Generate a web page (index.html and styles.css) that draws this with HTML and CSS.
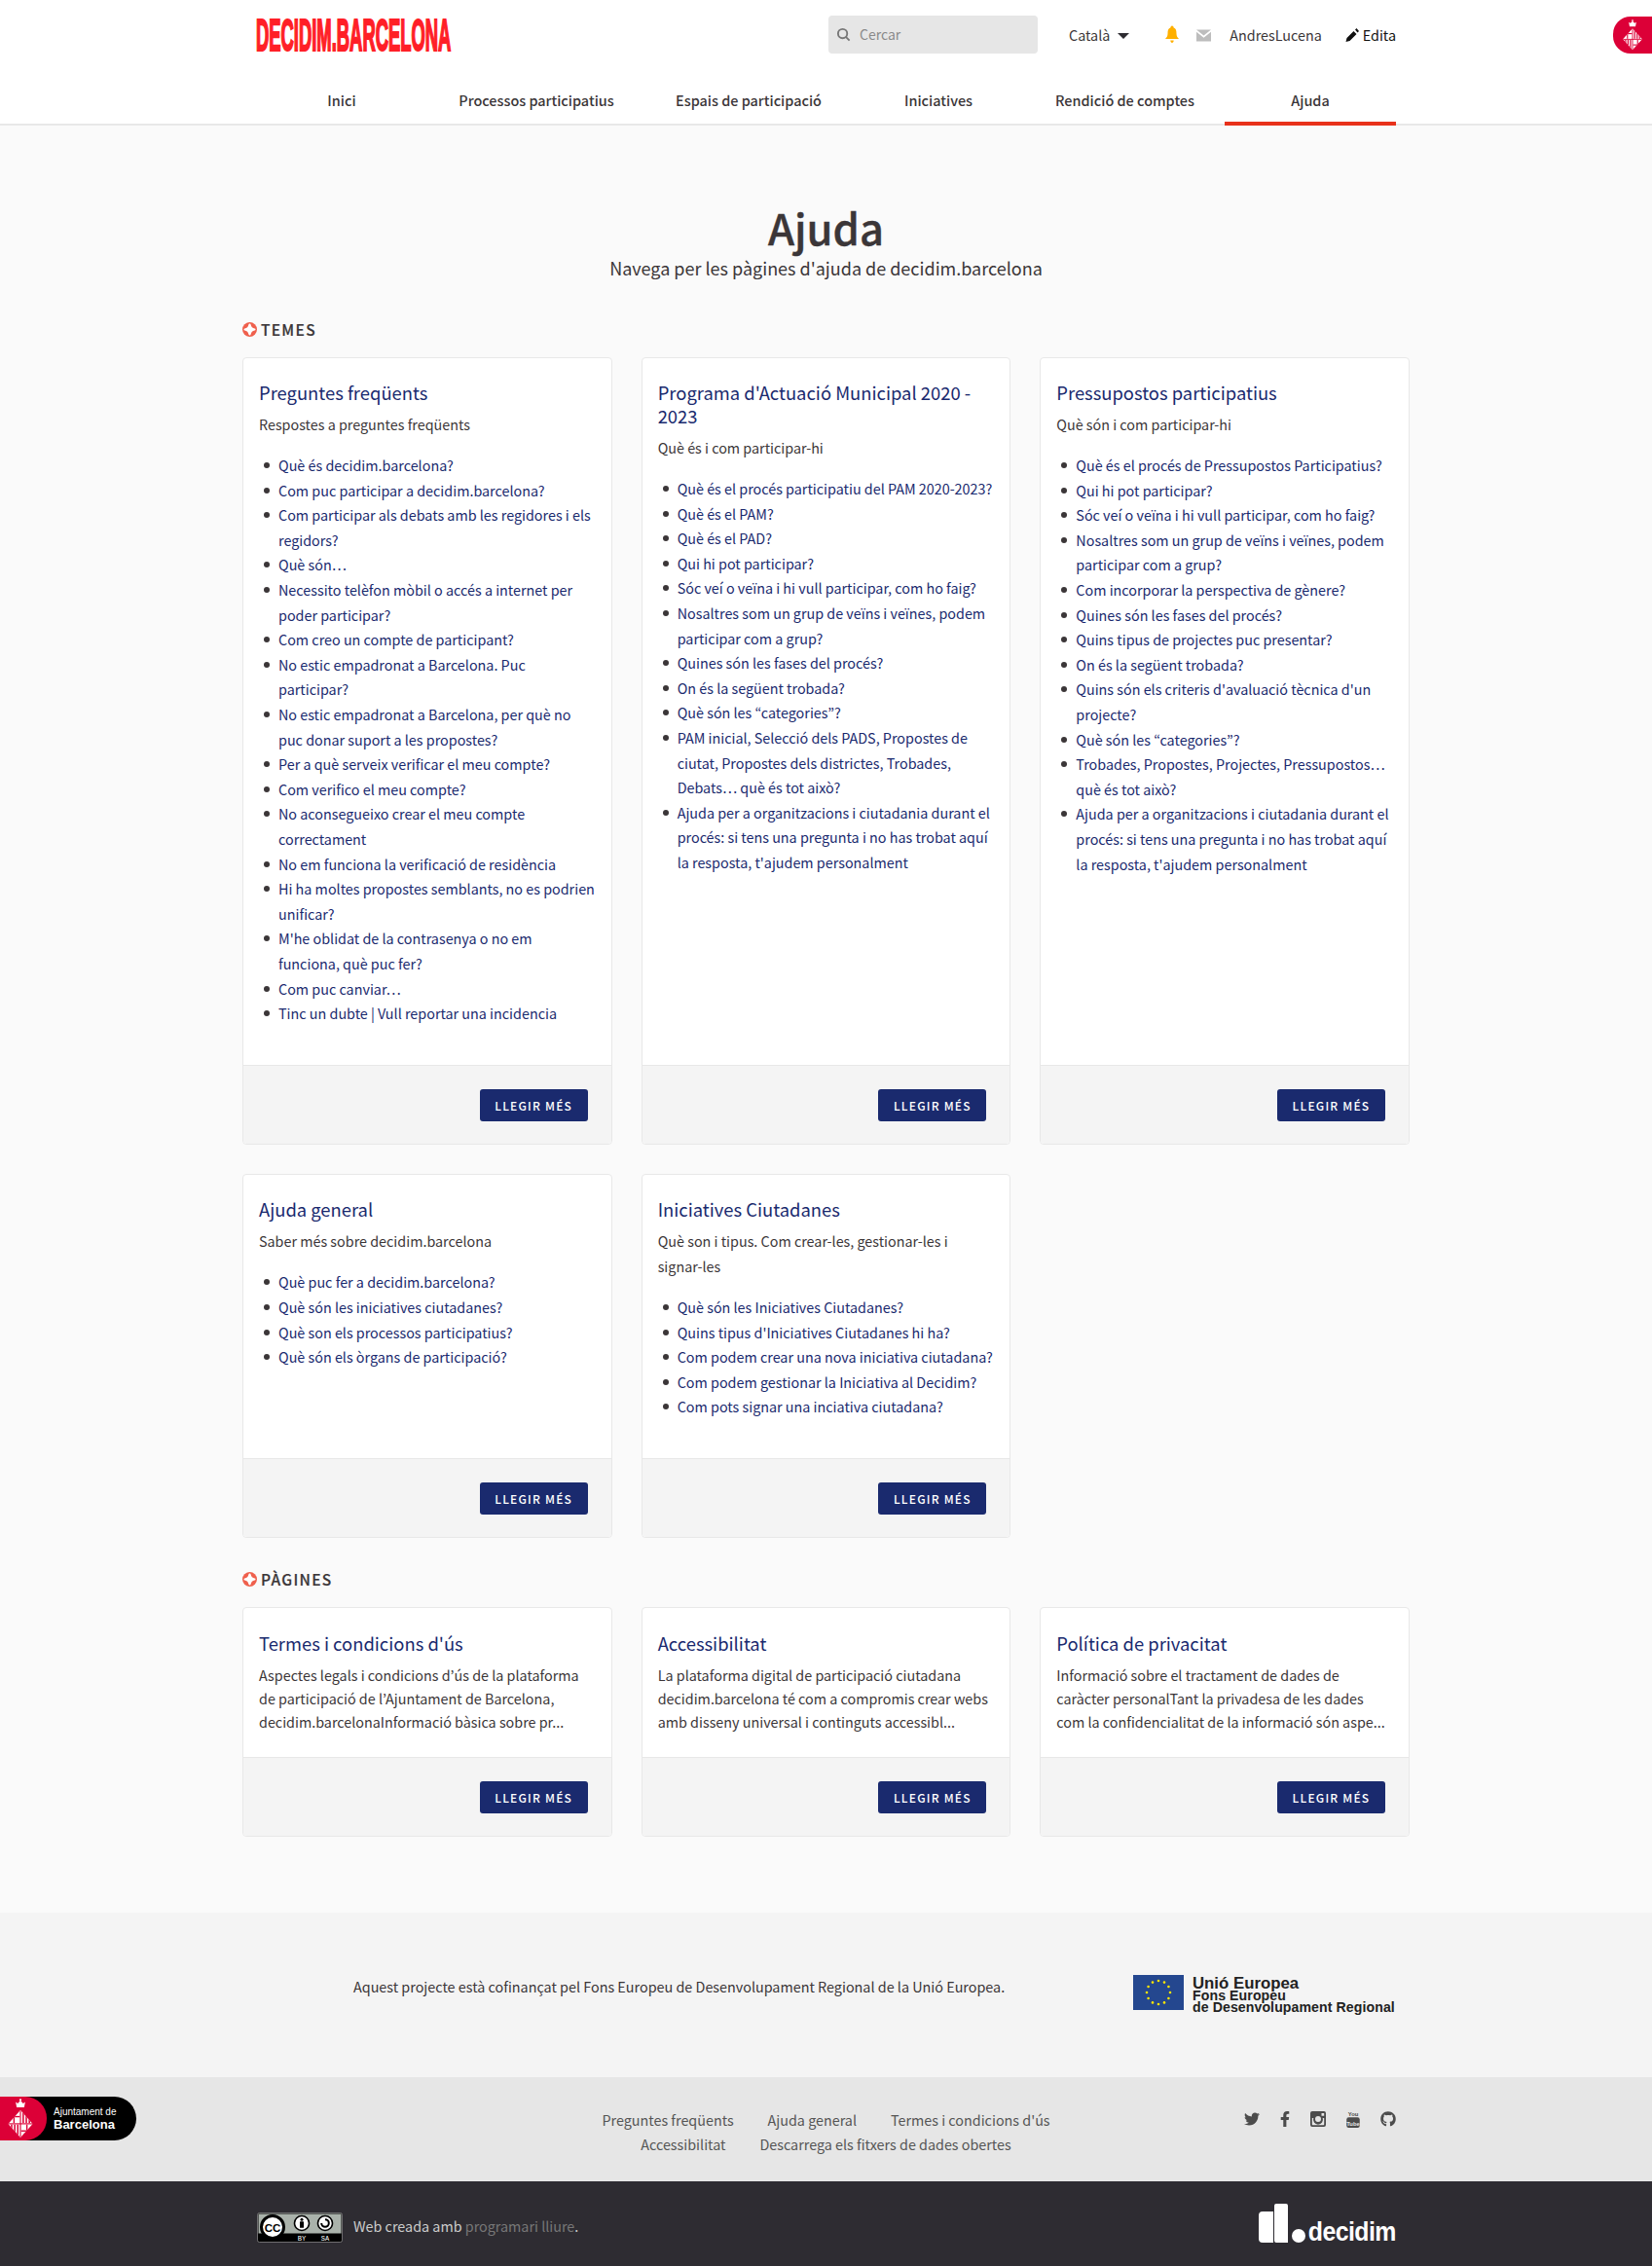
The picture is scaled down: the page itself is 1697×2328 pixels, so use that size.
FILE: index.html
```html
<!DOCTYPE html>
<html lang="ca">
<head>
<meta charset="utf-8">
<title>Ajuda</title>
<link rel="stylesheet" href="styles.css">
</head>
<body>
<svg class="defs" width="0" height="0" aria-hidden="true">
  <clipPath id="lozenge"><path d="M20 17L38 37 20 57 2 37z"/></clipPath>
  <symbol id="shield" viewBox="0 0 40 60">
    <path fill="#fff" d="M13 5l3 2 4-4 4 4 3-2-1.500 8h-11z"/>
    <circle cx="20" cy="2" r="1.600" fill="#fff"/>
    <g clip-path="url(#lozenge)">
      <rect width="40" height="60" fill="#fff"/>
      <g fill="#dc0037">
        <rect x="23" y="17" width="2.200" height="19"/><rect x="27.500" y="17" width="2.200" height="19"/><rect x="32" y="17" width="2.200" height="19"/>
        <rect x="6" y="38" width="2.200" height="19"/><rect x="10.500" y="38" width="2.200" height="19"/><rect x="15" y="38" width="2.200" height="19"/>
        <rect x="9.500" y="17" width="2" height="19"/><rect x="2" y="25.500" width="17" height="2"/>
        <rect x="28.500" y="38" width="2" height="19"/><rect x="21" y="46.500" width="17" height="2"/>
        <rect x="19.200" y="17" width="1.600" height="40"/><rect x="2" y="36.200" width="36" height="1.600"/>
      </g>
    </g>
  </symbol>
  <symbol id="plus" viewBox="0 0 16 16">
    <circle cx="8" cy="8" r="8" fill="#ef604d"/>
    <path fill="#fff" d="M8 2.800Q8.800 7.200 13.200 8 8.800 8.800 8 13.200 7.200 8.800 2.800 8 7.200 7.200 8 2.800z" stroke="#fff" stroke-width="2.400" stroke-linejoin="round"/>
  </symbol>
</svg>

<header class="site-header">
  <div class="top-row">
    <a class="logo">DECIDIM.BARCELONA</a>
    <div class="search">
      <svg class="search-icon" viewBox="0 0 16 16"><circle cx="7" cy="7" r="5" fill="none" stroke="#777" stroke-width="2"/><path d="M10.500 10.500l4 4" stroke="#777" stroke-width="2"/></svg>
      <span>Cercar</span>
    </div>
    <div class="lang">Català<span class="caret"></span></div>
    <svg class="bell" viewBox="0 0 16 18"><path fill="#ffb000" d="M8 0c1 0 1.500.8 1.500 1.800C12 2.600 12.500 5 12.500 8c0 2.500 1 4 2.500 5.500H1C2.500 12 3.500 10.500 3.500 8c0-3 .5-5.400 3-6.200C6.500.8 7 0 8 0zM6.300 15h3.400c0 1.500-.8 2.500-1.700 2.500S6.300 16.500 6.300 15z"/></svg>
    <svg class="mail" viewBox="0 0 16 13"><path fill="#bdbdbd" d="M0 0h16L8 6.500z"/><path fill="#bdbdbd" d="M0 2.500l8 6.500 8-6.500V13H0z"/></svg>
    <a class="user">AndresLucena</a>
    <a class="edit"><svg viewBox="0 0 14 14"><path fill="#111" d="M8.500 3l3 3L4.500 13 .5 14 1.500 10zM10 1.500L11.500 0 14 3 12.500 4.500z"/></svg>Edita</a>
  </div>
  <div class="corner-badge"><svg width="22" height="33"><use href="#shield"/></svg></div>
  <nav class="main-nav">
    <a>Inici</a>
    <a>Processos participatius</a>
    <a>Espais de participació</a>
    <a>Iniciatives</a>
    <a>Rendició de comptes</a>
    <a class="active">Ajuda</a>
  </nav>
</header>

<main class="content">
  <div class="page-title">
    <h1>Ajuda</h1>
    <p>Navega per les pàgines d'ajuda de decidim.barcelona</p>
  </div>

  <h2 class="section-title"><svg width="15" height="15"><use href="#plus"/></svg>TEMES</h2>
  <div class="card-grid">
    <article class="card">
      <div class="card-body">
        <h3>Preguntes freqüents</h3>
        <p>Respostes a preguntes freqüents</p>
        <ul>
          <li>Què és decidim.barcelona?</li>
          <li>Com puc participar a decidim.barcelona?</li>
          <li>Com participar als debats amb les regidores i els regidors?</li>
          <li>Què són…</li>
          <li>Necessito telèfon mòbil o accés a internet per poder participar?</li>
          <li>Com creo un compte de participant?</li>
          <li>No estic empadronat a Barcelona. Puc participar?</li>
          <li>No estic empadronat a Barcelona, per què no puc donar suport a les propostes?</li>
          <li>Per a què serveix verificar el meu compte?</li>
          <li>Com verifico el meu compte?</li>
          <li>No aconsegueixo crear el meu compte correctament</li>
          <li>No em funciona la verificació de residència</li>
          <li>Hi ha moltes propostes semblants, no es podrien unificar?</li>
          <li>M'he oblidat de la contrasenya o no em funciona, què puc fer?</li>
          <li>Com puc canviar…</li>
          <li>Tinc un dubte | Vull reportar una incidencia</li>
        </ul>
      </div>
      <div class="card-foot"><a class="btn">Llegir més</a></div>
    </article>
    <article class="card">
      <div class="card-body">
        <h3>Programa d'Actuació Municipal 2020 - 2023</h3>
        <p>Què és i com participar-hi</p>
        <ul>
          <li>Què és el procés participatiu del PAM 2020-2023?</li>
          <li>Què és el PAM?</li>
          <li>Què és el PAD?</li>
          <li>Qui hi pot participar?</li>
          <li>Sóc veí o veïna i hi vull participar, com ho faig?</li>
          <li>Nosaltres som un grup de veïns i veïnes, podem participar com a grup?</li>
          <li>Quines són les fases del procés?</li>
          <li>On és la següent trobada?</li>
          <li>Què són les “categories”?</li>
          <li>PAM inicial, Selecció dels PADS, Propostes de ciutat, Propostes dels districtes, Trobades, Debats… què és tot això?</li>
          <li>Ajuda per a organitzacions i ciutadania durant el procés: si tens una pregunta i no has trobat aquí la resposta, t'ajudem personalment</li>
        </ul>
      </div>
      <div class="card-foot"><a class="btn">Llegir més</a></div>
    </article>
    <article class="card">
      <div class="card-body">
        <h3>Pressupostos participatius</h3>
        <p>Què són i com participar-hi</p>
        <ul>
          <li>Què és el procés de Pressupostos Participatius?</li>
          <li>Qui hi pot participar?</li>
          <li>Sóc veí o veïna i hi vull participar, com ho faig?</li>
          <li>Nosaltres som un grup de veïns i veïnes, podem participar com a grup?</li>
          <li>Com incorporar la perspectiva de gènere?</li>
          <li>Quines són les fases del procés?</li>
          <li>Quins tipus de projectes puc presentar?</li>
          <li>On és la següent trobada?</li>
          <li>Quins són els criteris d'avaluació tècnica d'un projecte?</li>
          <li>Què són les “categories”?</li>
          <li>Trobades, Propostes, Projectes, Pressupostos… què és tot això?</li>
          <li>Ajuda per a organitzacions i ciutadania durant el procés: si tens una pregunta i no has trobat aquí la resposta, t'ajudem personalment</li>
        </ul>
      </div>
      <div class="card-foot"><a class="btn">Llegir més</a></div>
    </article>
    <article class="card">
      <div class="card-body">
        <h3>Ajuda general</h3>
        <p>Saber més sobre decidim.barcelona</p>
        <ul>
          <li>Què puc fer a decidim.barcelona?</li>
          <li>Què són les iniciatives ciutadanes?</li>
          <li>Què son els processos participatius?</li>
          <li>Què són els òrgans de participació?</li>
        </ul>
      </div>
      <div class="card-foot"><a class="btn">Llegir més</a></div>
    </article>
    <article class="card">
      <div class="card-body">
        <h3>Iniciatives Ciutadanes</h3>
        <p>Què son i tipus. Com crear-les, gestionar-les i signar-les</p>
        <ul>
          <li>Què són les Iniciatives Ciutadanes?</li>
          <li>Quins tipus d'Iniciatives Ciutadanes hi ha?</li>
          <li>Com podem crear una nova iniciativa ciutadana?</li>
          <li>Com podem gestionar la Iniciativa al Decidim?</li>
          <li>Com pots signar una inciativa ciutadana?</li>
        </ul>
      </div>
      <div class="card-foot"><a class="btn">Llegir més</a></div>
    </article>
  </div>

  <h2 class="section-title section-pages"><svg width="15" height="15"><use href="#plus"/></svg>PÀGINES</h2>
  <div class="card-grid">
    <article class="card">
      <div class="card-body compact">
        <h3>Termes i condicions d'ús</h3>
        <p>Aspectes legals i condicions d’ús de la plataforma de participació de l’Ajuntament de Barcelona, decidim.barcelonaInformació bàsica sobre pr...</p>
      </div>
      <div class="card-foot"><a class="btn">Llegir més</a></div>
    </article>
    <article class="card">
      <div class="card-body compact">
        <h3>Accessibilitat</h3>
        <p>La plataforma digital de participació ciutadana decidim.barcelona té com a compromis crear webs amb disseny universal i continguts accessibl...</p>
      </div>
      <div class="card-foot"><a class="btn">Llegir més</a></div>
    </article>
    <article class="card">
      <div class="card-body compact">
        <h3>Política de privacitat</h3>
        <p>Informació sobre el tractament de dades de caràcter personalTant la privadesa de les dades com la confidencialitat de la informació són aspe...</p>
      </div>
      <div class="card-foot"><a class="btn">Llegir més</a></div>
    </article>
  </div>
</main>

<section class="funding">
  <p>Aquest projecte està cofinançat pel Fons Europeu de Desenvolupament Regional de la Unió Europea.</p>
  <div class="eu-logo">
    <svg class="eu-flag" viewBox="0 0 52 36">
      <rect width="52" height="36" fill="#24478f"/>
      <g fill="#ffe600">
        <circle cx="26" cy="6" r="1.300"/><circle cx="32" cy="7.600" r="1.300"/><circle cx="36.400" cy="12" r="1.300"/><circle cx="38" cy="18" r="1.300"/><circle cx="36.400" cy="24" r="1.300"/><circle cx="32" cy="28.400" r="1.300"/><circle cx="26" cy="30" r="1.300"/><circle cx="20" cy="28.400" r="1.300"/><circle cx="15.600" cy="24" r="1.300"/><circle cx="14" cy="18" r="1.300"/><circle cx="15.600" cy="12" r="1.300"/><circle cx="20" cy="7.600" r="1.300"/>
      </g>
    </svg>
    <div class="eu-text">
      <strong>Unió Europea</strong>
      <span>Fons Europeu</span>
      <span>de Desenvolupament Regional</span>
    </div>
  </div>
</section>

<footer class="main-footer">
  <a class="bcn-logo">
    <span class="bcn-red"><svg width="28" height="42"><use href="#shield"/></svg></span>
    <span class="bcn-text"><small>Ajuntament de</small><b>Barcelona</b></span>
  </a>
  <nav class="foot-links">
    <a>Preguntes freqüents</a><a>Ajuda general</a><a>Termes i condicions d'ús</a><a>Accessibilitat</a><a>Descarrega els fitxers de dades obertes</a>
  </nav>
  <div class="socials">
    <svg class="s-tw" viewBox="0 0 512 512"><path d="M459.37 151.716c.325 4.548.325 9.097.325 13.645 0 138.72-105.583 298.558-298.558 298.558-59.452 0-114.68-17.219-161.137-47.106 8.447.974 16.568 1.299 25.34 1.299 49.055 0 94.213-16.568 130.274-44.832-46.132-.975-84.792-31.188-98.112-72.772 6.498.974 12.995 1.624 19.818 1.624 9.421 0 18.843-1.3 27.614-3.573-48.081-9.747-84.143-51.98-84.143-102.985v-1.299c13.969 7.797 30.214 12.67 47.431 13.319-28.264-18.843-46.781-51.005-46.781-87.391 0-19.492 5.197-37.36 14.294-52.954 51.655 63.675 129.3 105.258 216.365 109.807-1.624-7.797-2.599-15.918-2.599-24.04 0-57.828 46.782-104.934 104.934-104.934 30.213 0 57.502 12.67 76.67 33.137 23.715-4.548 46.456-13.32 66.599-25.34-7.798 24.366-24.366 44.833-46.132 57.827 21.117-2.273 41.584-8.122 60.426-16.243-14.292 20.791-32.161 39.308-52.628 54.253z"/></svg>
    <svg class="s-fb" viewBox="0 0 320 512"><path d="M279.14 288l14.22-92.66h-88.91v-60.13c0-25.35 12.42-50.06 52.24-50.06h40.42V6.26S260.43 0 225.36 0c-73.22 0-121.08 44.38-121.08 124.72v70.62H22.89V288h81.39v224h100.17V288z"/></svg>
    <svg class="s-ig" viewBox="0 0 16 16"><path fill-rule="evenodd" d="M2 0h12a2 2 0 0 1 2 2v12a2 2 0 0 1-2 2H2a2 2 0 0 1-2-2V2a2 2 0 0 1 2-2zm9.500 2v2.700h2.700V2zM1.800 7v6.600c0 .4.300.6.600.6h11.200c.3 0 .6-.2.600-.6V7h-1.500a5 5 0 1 1-9.400 0zM8 5a3 3 0 1 0 0 6 3 3 0 0 0 0-6z"/></svg>
    <svg class="s-yt" viewBox="0 0 15 20"><text x="7.500" y="6.500" text-anchor="middle" class="yt-you">You</text><rect y="8" width="15" height="12" rx="2.500"/><text x="7.500" y="17.500" text-anchor="middle" class="yt-tube">Tube</text></svg>
    <svg class="s-gh" viewBox="0 0 496 512"><path d="M244.8 8C106.1 8 0 113.3 0 252c0 110.9 69.8 205.800 169.500 239.200 12.800 2.300 17.300-5.600 17.300-12.100 0-6.200-.3-40.400-.3-61.400 0 0-70 15-84.700-29.800 0 0-11.400-29.100-27.800-36.600 0 0-22.900-15.700 1.600-16 0 0 24.900 2 38.600 25.800 21.900 38.600 58.600 27.500 72.900 20.900 2.300-16 8.800-27.100 16-33.700-55.900-6.200-112.300-14.300-112.300-110.500 0-27.500 7.600-41.300 23.600-58.900-2.600-6.500-11.100-33.300 2.600-67.900 20.900-6.500 69 27 69 27 20-5.600 41.500-8.500 62.800-8.500s42.800 2.900 62.800 8.500c0 0 48.100-33.600 69-27 13.700 34.700 5.200 61.400 2.600 67.900 16 17.700 25.800 31.500 25.800 58.900 0 96.500-58.900 104.200-114.800 110.500 9.200 7.900 17 22.900 17 46.400 0 33.700-.3 75.400-.3 83.600 0 6.500 4.600 14.400 17.300 12.100C428.200 457.800 496 362.900 496 252 496 113.300 383.500 8 244.800 8z"/></svg>
  </div>
</footer>

<footer class="sub-footer">
  <div class="cc">
    <svg class="cc-badge" viewBox="0 0 88 31">
      <rect x=".5" y=".5" width="87" height="30" rx="2" fill="#000" stroke="#aaa" stroke-width=".6"/>
      <rect x="1.500" y="1.500" width="85" height="20" fill="#aab2ab"/>
      <circle cx="16" cy="15" r="11.500" fill="#fff" stroke="#000" stroke-width="3"/>
      <text x="16" y="19.500" text-anchor="middle" class="cc-mark">CC</text>
      <circle cx="46" cy="11" r="7.500" fill="#fff" stroke="#000" stroke-width="1.600"/>
      <circle cx="46" cy="7.200" r="1.500"/><rect x="44" y="9.300" width="4" height="6.500" rx=".6"/>
      <circle cx="70" cy="11" r="7.500" fill="#fff" stroke="#000" stroke-width="1.600"/>
      <path d="M70 7.200a3.800 3.800 0 1 1-3.800 3.800" fill="none" stroke="#000" stroke-width="2"/>
      <text x="46" y="29" text-anchor="middle" class="cc-small">BY</text>
      <text x="70" y="29" text-anchor="middle" class="cc-small">SA</text>
    </svg>
    <span class="cc-text">Web creada amb <a>programari lliure</a>.</span>
  </div>
  <div class="decidim-logo">
    <svg viewBox="0 0 48 40"><path fill="#fff" d="M4 8h11v32H4a4 4 0 0 1-4-4V12a4 4 0 0 1 4-4zM18 0h10a2 2 0 0 1 2 2v38H18a2 2 0 0 1-2-2V2a2 2 0 0 1 2-2z"/><circle cx="41" cy="33" r="7" fill="#fff"/></svg>
    <span>decidim</span>
  </div>
</footer>
</body>
</html>
```
FILE: styles.css
```css
* { box-sizing: border-box; }
html, body { margin: 0; padding: 0; }
body {
  background: #fafafa;
  color: #3b3638;
  font-family: "Noto Sans CJK KR", "Noto Sans", sans-serif;
  font-feature-settings: "pwid" 1;
  font-size: 14.350px;
  line-height: 25.600px;
}
.defs { position: absolute; }
p, h1, h2, h3, ul { margin: 0; padding: 0; }

.site-header {
  position: relative;
  background: #fff;
  height: 129px;
  border-bottom: 2px solid #e8e8e8;
}
.top-row {
  width: 1171px;
  margin-left: 263px;
  height: 72px;
  display: flex;
  align-items: flex-start;
  padding-top: 16px;
}
.logo {
  width: 204px;
  margin-top: 1px;
  color: #ff1f27;
  font-family: "Liberation Sans", sans-serif;
  font-weight: 700;
  font-size: 46px;
  line-height: 38px;
  white-space: nowrap;
  -webkit-text-stroke: 2.200px #ff1f27;
  transform: scaleX(.4);
  transform-origin: left center;
}
.search {
  margin-left: 384px;
  width: 215px;
  height: 39px;
  background: #e6e6e6;
  border-radius: 4px;
  display: flex;
  align-items: center;
  padding-left: 8px;
  color: #8a8a8a;
  font-size: 14px;
}
.search-icon { width: 15px; height: 15px; margin-right: 9px; }
.lang {
  margin-left: 32px;
  height: 39px;
  display: flex;
  align-items: center;
  color: #3b3638;
}
.caret {
  width: 0; height: 0;
  margin-left: 8px;
  margin-top: 3px;
  border: 6px solid transparent;
  border-top: 6px solid #2d2b31;
  border-bottom: 0;
}
.bell { width: 16px; height: 19px; margin-left: 36px; margin-top: 10px; }
.mail { width: 15px; height: 13px; margin-left: 17px; margin-top: 14px; }
.user { margin-left: 19px; line-height: 39px; }
.edit {
  margin-left: auto;
  line-height: 39px;
  color: #111;
  display: flex;
  align-items: center;
}
.edit svg { width: 14px; height: 14px; margin-right: 4px; }
.corner-badge {
  position: absolute;
  right: 0;
  top: 17px;
  width: 40px;
  height: 38px;
  background: #dc0037;
  border-radius: 18px 0 0 18px;
  display: flex;
  align-items: center;
  justify-content: center;
}
.main-nav {
  width: 1171px;
  margin-left: 263px;
  height: 55px;
  display: grid;
  grid-template-columns: 176fr 224fr 212fr 178fr 205fr 176fr;
  font-weight: 500;
  font-size: 14.450px;
  text-align: center;
}
.main-nav a {
  position: relative;
  line-height: 62px;
  height: 55px;
  white-space: nowrap;
}
.main-nav a.active::after {
  content: "";
  position: absolute;
  left: 0;
  right: 0;
  bottom: -2px;
  height: 4px;
  background: #e8311a;
}

.content {
  width: 1199px;
  margin-left: 249px;
  padding-bottom: 78px;
}
.page-title { text-align: center; padding-top: 77px; }
.page-title h1 {
  font-size: 43.500px;
  line-height: 55px;
  font-weight: 500;
  -webkit-text-stroke: .4px #3b3638;
}
.page-title p {
  font-size: 18px;
  line-height: 28px;
}
.section-title {
  margin-top: 37px;
  margin-bottom: 17px;
  display: flex;
  align-items: center;
  font-size: 15.500px;
  line-height: 24px;
  font-weight: 500;
  letter-spacing: 1.300px;
  -webkit-text-stroke: .2px #3b3638;
}
.section-title svg { margin-right: 4px; }
.section-pages { margin-top: 30px; margin-bottom: 17px; }

.card-grid {
  display: grid;
  grid-template-columns: repeat(3, 1fr);
  gap: 30px;
}
.card {
  display: flex;
  flex-direction: column;
  background: #fff;
  border: 1px solid #e8e8e8;
  border-radius: 4px;
  overflow: hidden;
}
.card-body { flex: 1; padding: 23px 16px 40.500px; }
.card-body h3 {
  font-size: 18.400px;
  line-height: 24px;
  font-weight: 400;
  color: #1a2a6e;
  margin-bottom: 8px;
}
.card-body ul { list-style: none; margin-top: 16.500px; }
.card-body li {
  position: relative;
  padding-left: 20px;
  color: #1a2a6e;
}
.card-body li::before {
  content: "";
  position: absolute;
  left: 5px;
  top: 10px;
  width: 6px;
  height: 6px;
  border-radius: 50%;
  background: #3b3638;
}
.card-body.compact { padding: 24px 16px 24px; }
.card-body.compact h3 { margin-bottom: 9px; }
.card-body.compact p { line-height: 24px; }
.card-foot {
  height: 81px;
  background: #f4f4f4;
  border-top: 1px solid #e8e8e8;
  display: flex;
  justify-content: flex-end;
  align-items: flex-start;
  padding: 24px 24px 0 0;
}
.btn {
  width: 111px;
  height: 33px;
  border-radius: 3px;
  background: #1a2a6e;
  color: #fff;
  text-align: center;
  font-size: 12px;
  font-weight: 500;
  line-height: 33px;
  letter-spacing: 1.200px;
  text-transform: uppercase;
}

.funding {
  height: 169px;
  background: #f4f4f4;
  padding: 0 263px 0 363px;
  display: flex;
  justify-content: space-between;
  align-items: flex-start;
}
.funding p { margin-top: 63px; font-size: 14.370px; }
.eu-logo { display: flex; margin-top: 64px; }
.eu-flag { width: 52px; height: 36px; margin-right: 9px; }
.eu-text {
  display: flex;
  flex-direction: column;
  font-family: "Liberation Sans", sans-serif;
  color: #222;
  width: 209px;
  padding-top: 1px;
}
.eu-text strong { font-size: 16.800px; line-height: 15px; font-weight: 700; }
.eu-text span { font-size: 14.100px; line-height: 11.500px; font-weight: 700; letter-spacing: .1px; white-space: nowrap; }

.main-footer {
  height: 107px;
  background: #e6e6e6;
  display: grid;
  grid-template-columns: 1fr 590px 1fr;
  align-items: start;
}
.bcn-logo {
  margin-top: 20px;
  width: 140px;
  height: 45px;
  background: #000;
  border-radius: 0 23px 23px 0;
  display: flex;
  align-items: center;
}
.bcn-red {
  width: 48px;
  height: 45px;
  background: #dc0037;
  border-radius: 0 22px 22px 0;
  display: flex;
  align-items: center;
  padding-left: 7px;
}
.bcn-text {
  display: flex;
  flex-direction: column;
  color: #fff;
  margin-left: 7px;
  font-family: "Liberation Sans", sans-serif;
  white-space: nowrap;
}
.bcn-text small { font-size: 10px; line-height: 12px; }
.bcn-text b { font-size: 13px; line-height: 14px; font-weight: 700; }
.foot-links {
  margin-top: 31px;
  display: flex;
  flex-wrap: wrap;
  justify-content: center;
  column-gap: 35px;
  color: #555;
  line-height: 25px;
  padding: 0 30px;
}
.socials {
  margin-top: 33px;
  padding-right: 263px;
  display: flex;
  justify-content: flex-end;
  align-items: center;
  height: 20px;
  gap: 21px;
}
.socials svg { fill: #4c4c4c; height: 16px; display: block; }
.s-tw { width: 16px; }
.s-fb { width: 10px; }
.s-ig { width: 16px; }
.s-yt { width: 14px; height: 18px !important; }
.s-gh { width: 16px; }
.yt-you { font: 700 6.500px "Liberation Sans Narrow", "Liberation Sans", sans-serif; fill: #4c4c4c; }
.yt-tube { font: 700 6.500px "Liberation Sans Narrow", "Liberation Sans", sans-serif; fill: #e6e6e6; }

.sub-footer {
  height: 88px;
  background: #2e2c32;
  padding: 23px 263px 0 264px;
  display: flex;
  justify-content: space-between;
  align-items: flex-start;
}
.cc { display: flex; align-items: center; color: #ccc; margin-top: 9px; }
.cc-badge { width: 88px; height: 31px; margin-right: 11px; }
.cc-text { margin-bottom: 5px; }
.cc a { color: #777; }
.cc-mark { font: 700 11.500px "Liberation Sans", sans-serif; }
.cc-small { font: 7px "Liberation Mono", monospace; fill: #fff; }
.decidim-logo { position: relative; width: 141px; height: 40px; }
.decidim-logo svg { position: absolute; left: 0; top: 0; width: 48px; height: 40px; }
.decidim-logo span {
  position: absolute;
  right: 0;
  bottom: -4px;
  font-family: "Liberation Sans", sans-serif;
  font-weight: 700;
  font-size: 27px;
  line-height: 30px;
  color: #fff;
  letter-spacing: -.6px;
  transform: scaleX(.92);
  transform-origin: right center;
}
```
